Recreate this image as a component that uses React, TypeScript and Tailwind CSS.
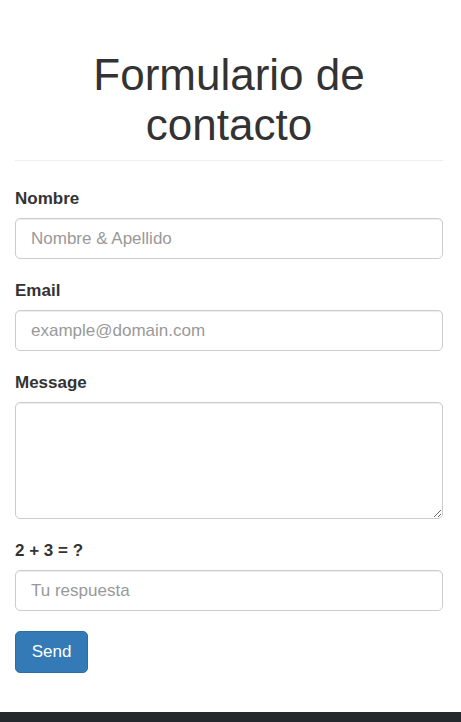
import React from 'react';

const font = { fontFamily: '"Liberation Sans", Arial, sans-serif' };

function Field({ label, children }: { label: string; children: React.ReactNode }) {
  return (
    <div className="mb-[20px]">
      <label className="block h-[24px] mb-[7px] text-[17px] leading-[24px] font-bold text-[#333]">{label}</label>
      {children}
    </div>
  );
}

const inputCls =
  'block w-full px-[15px] rounded-[5px] border border-[#ccc] bg-white text-[17px] text-[#555] placeholder:text-[#999] outline-none shadow-[inset_0_1px_1px_rgba(0,0,0,0.075)]';

export default function App() {
  return (
    <div className="w-[461px] h-[722px] flex flex-col bg-white" style={font}>
      <div className="flex-1 pl-[15px] pr-[18px]">
        <h1 className="pt-[50px] text-center text-[44px] leading-[50px] font-normal text-[#333]">
          Formulario de
          <br />
          contacto
        </h1>
        <hr className="mt-[10px] mb-[26px] border-t border-[#eee]" />
        <form onSubmit={(e) => e.preventDefault()}>
          <Field label="Nombre">
            <input className={`${inputCls} h-[41px]`} placeholder="Nombre & Apellido" />
          </Field>
          <Field label="Email">
            <input className={`${inputCls} h-[41px]`} placeholder="example@domain.com" />
          </Field>
          <Field label="Message">
            <textarea className={`${inputCls} h-[117px] py-[8px] resize-y`} />
          </Field>
          <Field label="2 + 3 = ?">
            <input className={`${inputCls} h-[41px]`} placeholder="Tu respuesta" />
          </Field>
          <button
            type="submit"
            className="h-[42px] w-[73px] rounded-[5px] bg-[#337ab7] border border-[#2e6da4] text-white text-[17px]"
          >
            Send
          </button>
        </form>
      </div>
      <div className="h-[10px] bg-[#24292e]" />
    </div>
  );
}
